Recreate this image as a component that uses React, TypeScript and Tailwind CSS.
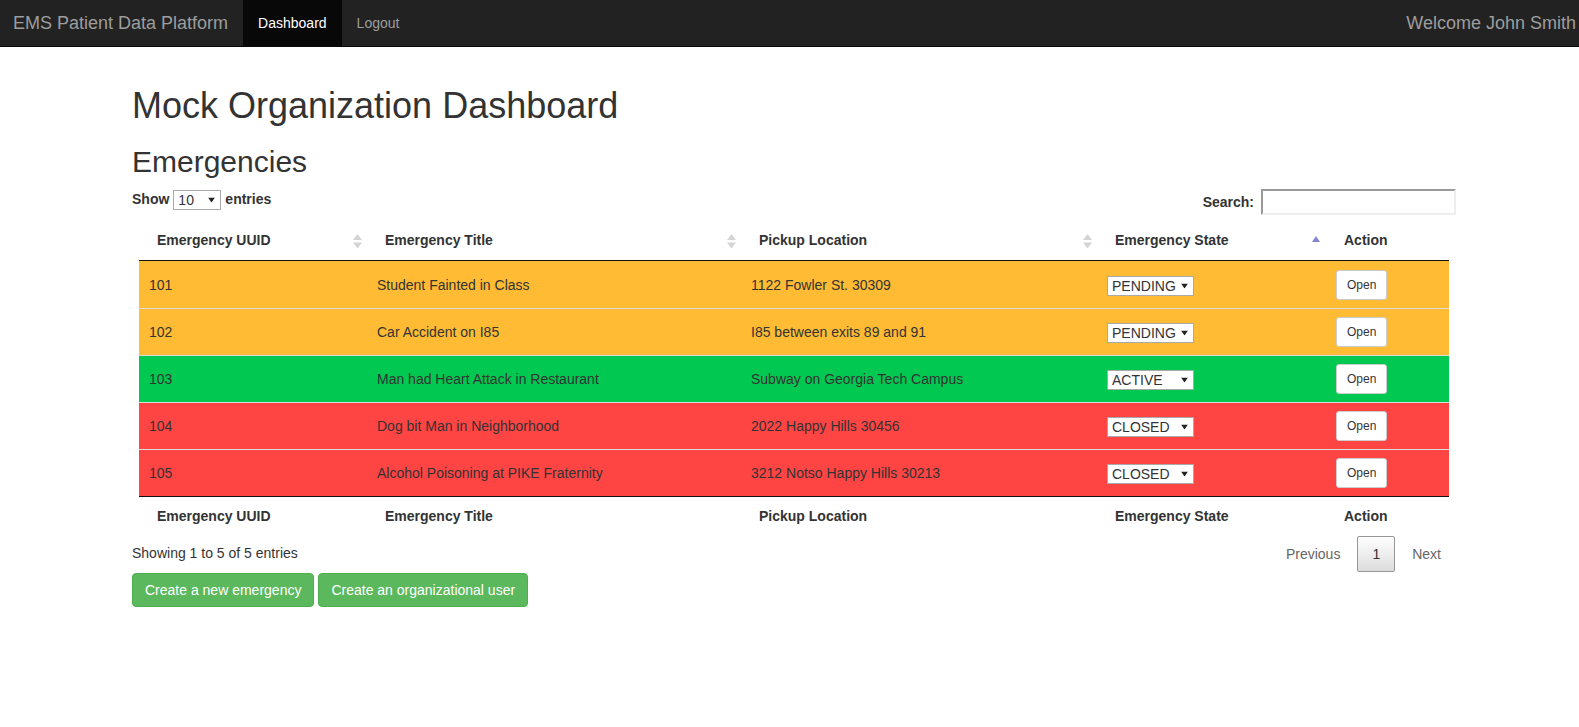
import React from "react";

type Row = {
  id: string;
  title: string;
  loc: string;
  state: "PENDING" | "ACTIVE" | "CLOSED";
};

const rows: Row[] = [
  { id: "101", title: "Student Fainted in Class", loc: "1122 Fowler St. 30309", state: "PENDING" },
  { id: "102", title: "Car Accident on I85", loc: "I85 between exits 89 and 91", state: "PENDING" },
  { id: "103", title: "Man had Heart Attack in Restaurant", loc: "Subway on Georgia Tech Campus", state: "ACTIVE" },
  { id: "104", title: "Dog bit Man in Neighborhood", loc: "2022 Happy Hills 30456", state: "CLOSED" },
  { id: "105", title: "Alcohol Poisoning at PIKE Fraternity", loc: "3212 Notso Happy Hills 30213", state: "CLOSED" },
];

const rowBg: Record<Row["state"], string> = {
  PENDING: "bg-[#ffbb33]",
  ACTIVE: "bg-[#00c851]",
  CLOSED: "bg-[#ff4444]",
};

function SortBoth() {
  return (
    <svg className="absolute right-[5px] top-[13px]" width="9" height="15" viewBox="0 0 9 15">
      <polygon points="4.5,0 0,6 9,6" fill="#d4d4d4" />
      <polygon points="0,8.5 9,8.5 4.5,14.5" fill="#d4d4d4" />
    </svg>
  );
}

function SortAsc() {
  return (
    <svg className="absolute right-[6px] top-[15px]" width="8" height="6" viewBox="0 0 8 6">
      <polygon points="4,0 0,6 8,6" fill="#8585d6" />
    </svg>
  );
}

function Caret() {
  return (
    <svg className="pointer-events-none absolute right-[6px] top-1/2 -translate-y-1/2" width="7" height="5" viewBox="0 0 7 5">
      <polygon points="0,0 7,0 3.5,5" fill="#222" />
    </svg>
  );
}

function FakeSelect({ value, options, width }: { value: string; options: string[]; width: string }) {
  return (
    <span className={`relative inline-block align-middle ${width}`}>
      <select
        defaultValue={value}
        className="block h-[20px] w-full appearance-none rounded-none border border-[#a9a9a9] bg-white pl-[4px] pr-[14px] text-[14px] font-normal leading-[18px] text-[#333] outline-none"
      >
        {options.map((o) => (
          <option key={o}>{o}</option>
        ))}
      </select>
      <Caret />
    </span>
  );
}

export default function App() {
  const thBase = "relative px-[18px] py-[10px] text-left text-[14px] font-bold leading-[19px] text-[#333]";
  return (
    <div className="min-h-screen bg-white font-['Liberation_Sans',Arial,sans-serif] text-[#333]">
      <nav className="flex h-[47px] items-stretch border-b border-[#080808] bg-[#222]">
        <div className="flex items-center pb-[1px] pl-[13px] pr-[15px] text-[18px] leading-[20px] text-[#9d9d9d]">
          EMS Patient Data Platform
        </div>
        <div className="flex items-center bg-[#080808] px-[15px] pb-[1px] text-[14px] leading-[20px] text-white">
          Dashboard
        </div>
        <div className="flex items-center px-[15px] pb-[1px] text-[14px] leading-[20px] text-[#9d9d9d]">Logout</div>
        <div className="ml-auto flex items-center pb-[1px] pr-[3px] text-[18px] leading-[20px] text-[#9d9d9d]">
          Welcome John Smith
        </div>
      </nav>

      <main className="ml-[132px] w-[1324px]">
        <h1 className="mt-[39px] text-[36px] font-normal leading-[40px] text-[#333]">Mock Organization Dashboard</h1>
        <h2 className="mt-[19px] text-[30px] font-normal leading-[33px] text-[#333]">Emergencies</h2>

        <div className="mt-[11px] flex items-start justify-between">
          <div className="flex h-[20px] items-center text-[14px] font-bold leading-[20px]">
            <span>Show</span>
            <span className="mx-[4px]">
              <FakeSelect value="10" options={["10", "25", "50", "100"]} width="w-[48px]" />
            </span>
            <span>entries</span>
          </div>
          <div className="flex h-[26px] items-center text-[14px] font-bold leading-[20px]">
            <span>Search:</span>
            <input
              type="text"
              className="ml-[7px] h-[26px] w-[195px] border-2 border-b-[#eeeeee] border-l-[#9a9a9a] border-r-[#eeeeee] border-t-[#9a9a9a] bg-white outline-none"
            />
          </div>
        </div>

        <div className="mt-[6px] px-[7px]">
          <table className="w-full table-fixed border-separate border-spacing-0">
            <colgroup>
              <col className="w-[228px]" />
              <col className="w-[374px]" />
              <col className="w-[356px]" />
              <col className="w-[229px]" />
              <col className="w-[123px]" />
            </colgroup>
            <thead>
              <tr>
                <th className={`${thBase} border-b border-[#111]`}>
                  Emergency UUID
                  <SortBoth />
                </th>
                <th className={`${thBase} border-b border-[#111]`}>
                  Emergency Title
                  <SortBoth />
                </th>
                <th className={`${thBase} border-b border-[#111]`}>
                  Pickup Location
                  <SortBoth />
                </th>
                <th className={`${thBase} border-b border-[#111]`}>
                  Emergency State
                  <SortAsc />
                </th>
                <th className={`${thBase} border-b border-[#111]`}>Action</th>
              </tr>
            </thead>
            <tbody>
              {rows.map((r, i) => {
                const td = `border-t px-[10px] py-[8px] align-middle text-[14px] leading-[20px] text-[#333] ${
                  i === 0 ? "border-t-transparent" : "border-t-[#dddddd]"
                }`;
                return (
                  <tr key={r.id} className={rowBg[r.state]}>
                    <td className={td}>{r.id}</td>
                    <td className={td}>{r.title}</td>
                    <td className={td}>{r.loc}</td>
                    <td className={td}>
                      <FakeSelect value={r.state} options={["PENDING", "ACTIVE", "CLOSED"]} width="w-[87px]" />
                    </td>
                    <td className={td}>
                      <button className="h-[30px] rounded-[3px] border border-[#cccccc] bg-white px-[10px] text-[12px] leading-[18px] text-[#333]">
                        Open
                      </button>
                    </td>
                  </tr>
                );
              })}
            </tbody>
            <tfoot>
              <tr>
                <th className={`${thBase} border-t border-[#111]`}>Emergency UUID</th>
                <th className={`${thBase} border-t border-[#111]`}>Emergency Title</th>
                <th className={`${thBase} border-t border-[#111]`}>Pickup Location</th>
                <th className={`${thBase} border-t border-[#111]`}>Emergency State</th>
                <th className={`${thBase} border-t border-[#111]`}>Action</th>
              </tr>
            </tfoot>
          </table>
        </div>

        <div className="flex items-start justify-between">
          <div className="pt-[7px] text-[14px] leading-[20px] text-[#333]">Showing 1 to 5 of 5 entries</div>
          <div className="flex items-center text-[14px] leading-[20px]">
            <span className="border border-transparent px-[14px] py-[7px] text-[#666]">Previous</span>
            <span className="ml-[2px] rounded-[2px] border border-[#979797] bg-gradient-to-b from-white to-[#dcdcdc] px-[14px] py-[7px] text-[#333]">
              1
            </span>
            <span className="ml-[2px] border border-transparent px-[14px] py-[7px] text-[#666]">Next</span>
          </div>
        </div>

        <div className="mt-[1px] flex gap-[4px]">
          <button className="rounded-[4px] border border-[#4cae4c] bg-[#5cb85c] px-[12px] py-[6px] text-[14px] leading-[20px] text-white">
            Create a new emergency
          </button>
          <button className="rounded-[4px] border border-[#4cae4c] bg-[#5cb85c] px-[12px] py-[6px] text-[14px] leading-[20px] text-white">
            Create an organizational user
          </button>
        </div>
      </main>
    </div>
  );
}
